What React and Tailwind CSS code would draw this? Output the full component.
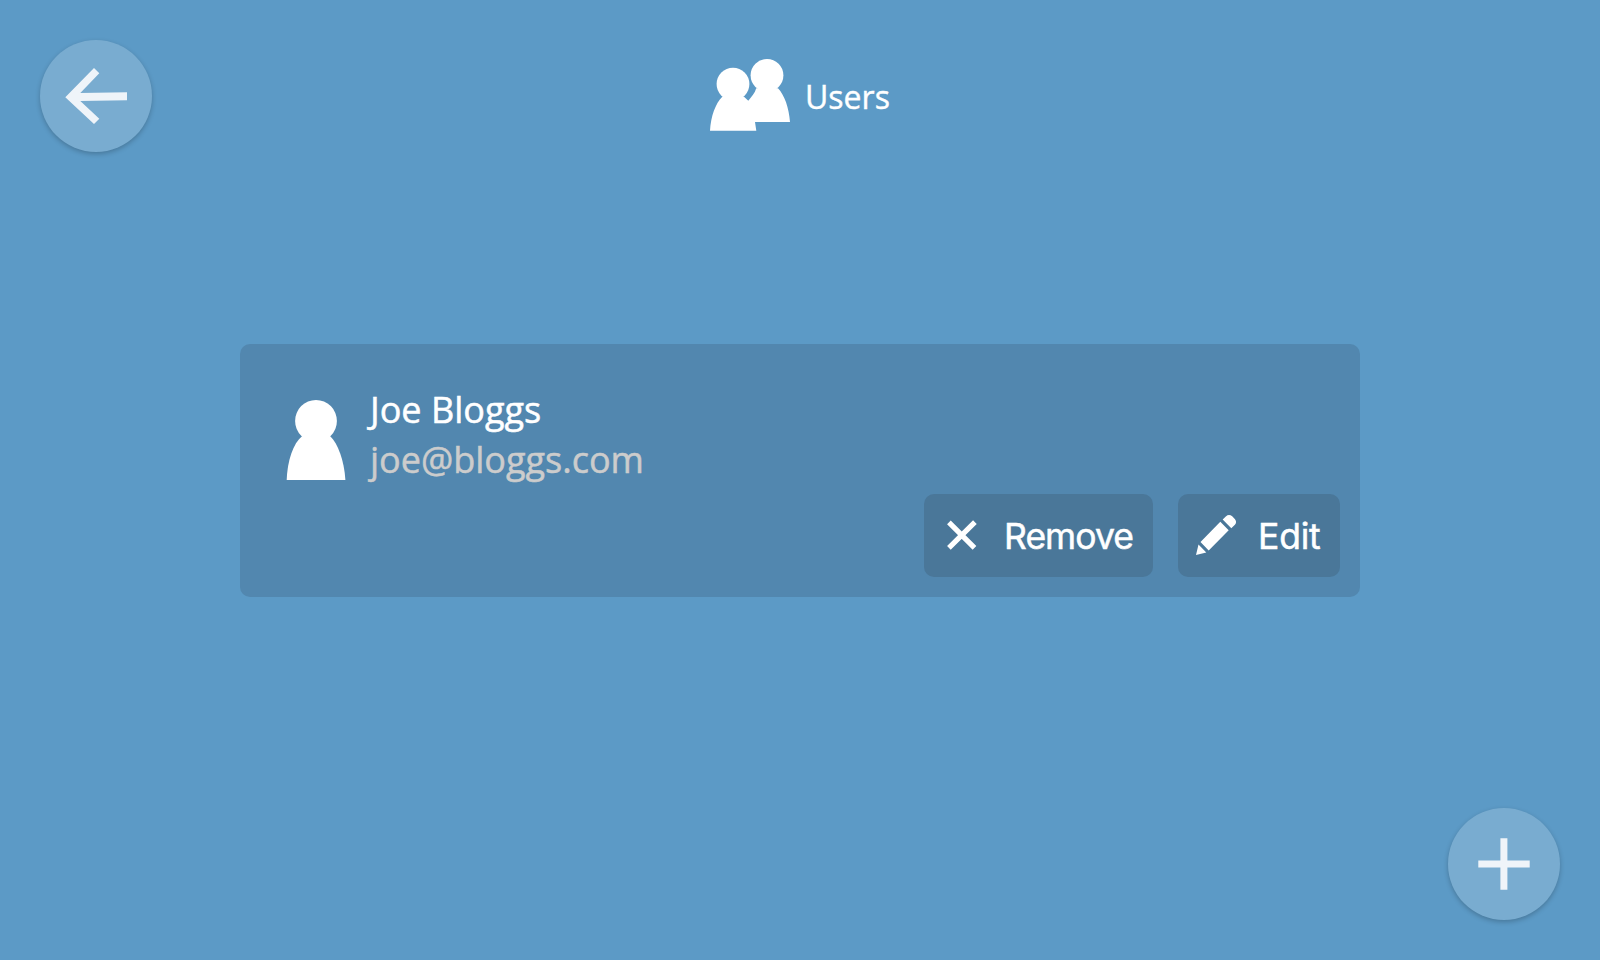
function RoundButton({ label, children }) {
  return (
    <button
      aria-label={label}
      className="size-28 shrink-0 rounded-full bg-[#79acd0] shadow-[0_2px_5px_rgba(0,0,0,0.22)]"
    >
      <svg viewBox="0 0 112 112" className="size-28 fill-[#eff4f9]">
        {children}
      </svg>
    </button>
  );
}

function UsersIcon() {
  return (
    <svg viewBox="0 0 80 80" className="size-20 fill-white">
      <circle cx="57" cy="21.3" r="16.4" />
      <circle cx="23" cy="30.1" r="16.4" />
      <path d="M12.3 42.7C5.5 49.5 .9 62 0 76.8H46.3L45 68H80C79 54 74.5 41 68 34.3H46.2C45 39 41.5 43 38.3 46.8L34 42.7Z" />
    </svg>
  );
}

function UserIcon() {
  return (
    <svg viewBox="0 0 80 80" className="size-20 fill-white">
      <circle cx="40" cy="20.9" r="20.9" />
      <path d="M26.3 36C17 43.5 11.3 61 10.7 80H69.4C68.3 61 62 43.5 54 36Z" />
    </svg>
  );
}

function ActionButton({ label, children, className }) {
  return (
    <button
      className={`flex h-[83px] items-center rounded-[10px] bg-[#4a7799] pl-[18px] font-['Inter',sans-serif] text-[35.5px] leading-none font-normal text-white [-webkit-text-stroke:0.5px_white] ${className}`}
    >
      <svg viewBox="0 0 40 40" className="mr-[22px] mb-px size-10 shrink-0 fill-white">
        {children}
      </svg>
      <span className="pt-[3px]">{label}</span>
    </button>
  );
}

export default function App() {
  return (
    <div className="flex h-screen w-full flex-col bg-[#5c9ac6] p-10 font-['Open_Sans',sans-serif] text-white">
      <header className="flex h-28 shrink-0 items-start justify-between">
        <RoundButton label="Back">
          <path d="M25.3 57.3 54 28 59.3 33.3 40.3 53 87 52.2V60.2L40.3 61 59.3 78.8 54 84Z" />
        </RoundButton>
        <h1 className="flex h-20 w-[180px] items-center gap-[15px] pt-7 text-[32px] font-normal [-webkit-text-stroke:0.4px_white]">
          <UsersIcon />
          <span className="pt-[5px] leading-none">Users</span>
        </h1>
        <div className="size-28" />
      </header>

      <main className="flex flex-1 flex-col items-center pt-48">
        <section className="flex h-[253px] w-[1120px] flex-col justify-between rounded-[10px] bg-[#5287af] p-5">
          <div className="flex gap-[14px] pt-5 pl-4">
            <div className="pt-4">
              <UserIcon />
            </div>
            <div className="pt-px text-[36px] leading-[50px]">
              <div className="[-webkit-text-stroke:0.5px_white]">Joe Bloggs</div>
              <div className="text-[#cccccc] [-webkit-text-stroke:0.5px_#cccccc]">
                joe@bloggs.com
              </div>
            </div>
          </div>
          <div className="-mt-10 flex justify-end gap-[25px]">
            <ActionButton label="Remove" className="w-[229px] tracking-[-0.95px]">
              <path
                d="M6.9 7.4 32.5 32.9M32.9 7.1 6.9 32.9"
                className="stroke-white stroke-[5.2]"
              />
            </ActionButton>
            <ActionButton label="Edit" className="w-[162px] tracking-[-0.2px]">
              <path d="M0 40 2.5 29.4 10.3 37.4Z M4.5 27 24.3 6.8 32.7 15.3 12.7 35.5Z M26.7 4.5 29.8 1.4Q33-1.2 36.2 1.3L38.8 4Q41.2 7 38.9 9.7L35.3 13.2Z" />
            </ActionButton>
          </div>
        </section>
      </main>

      <footer className="flex shrink-0 justify-end">
        <RoundButton label="Add user">
          <path d="M52.4 30.3H59.4V52.4H81.7V59.4H59.4V81.7H52.4V59.4H30.3V52.4H52.4Z" />
        </RoundButton>
      </footer>
    </div>
  );
}
